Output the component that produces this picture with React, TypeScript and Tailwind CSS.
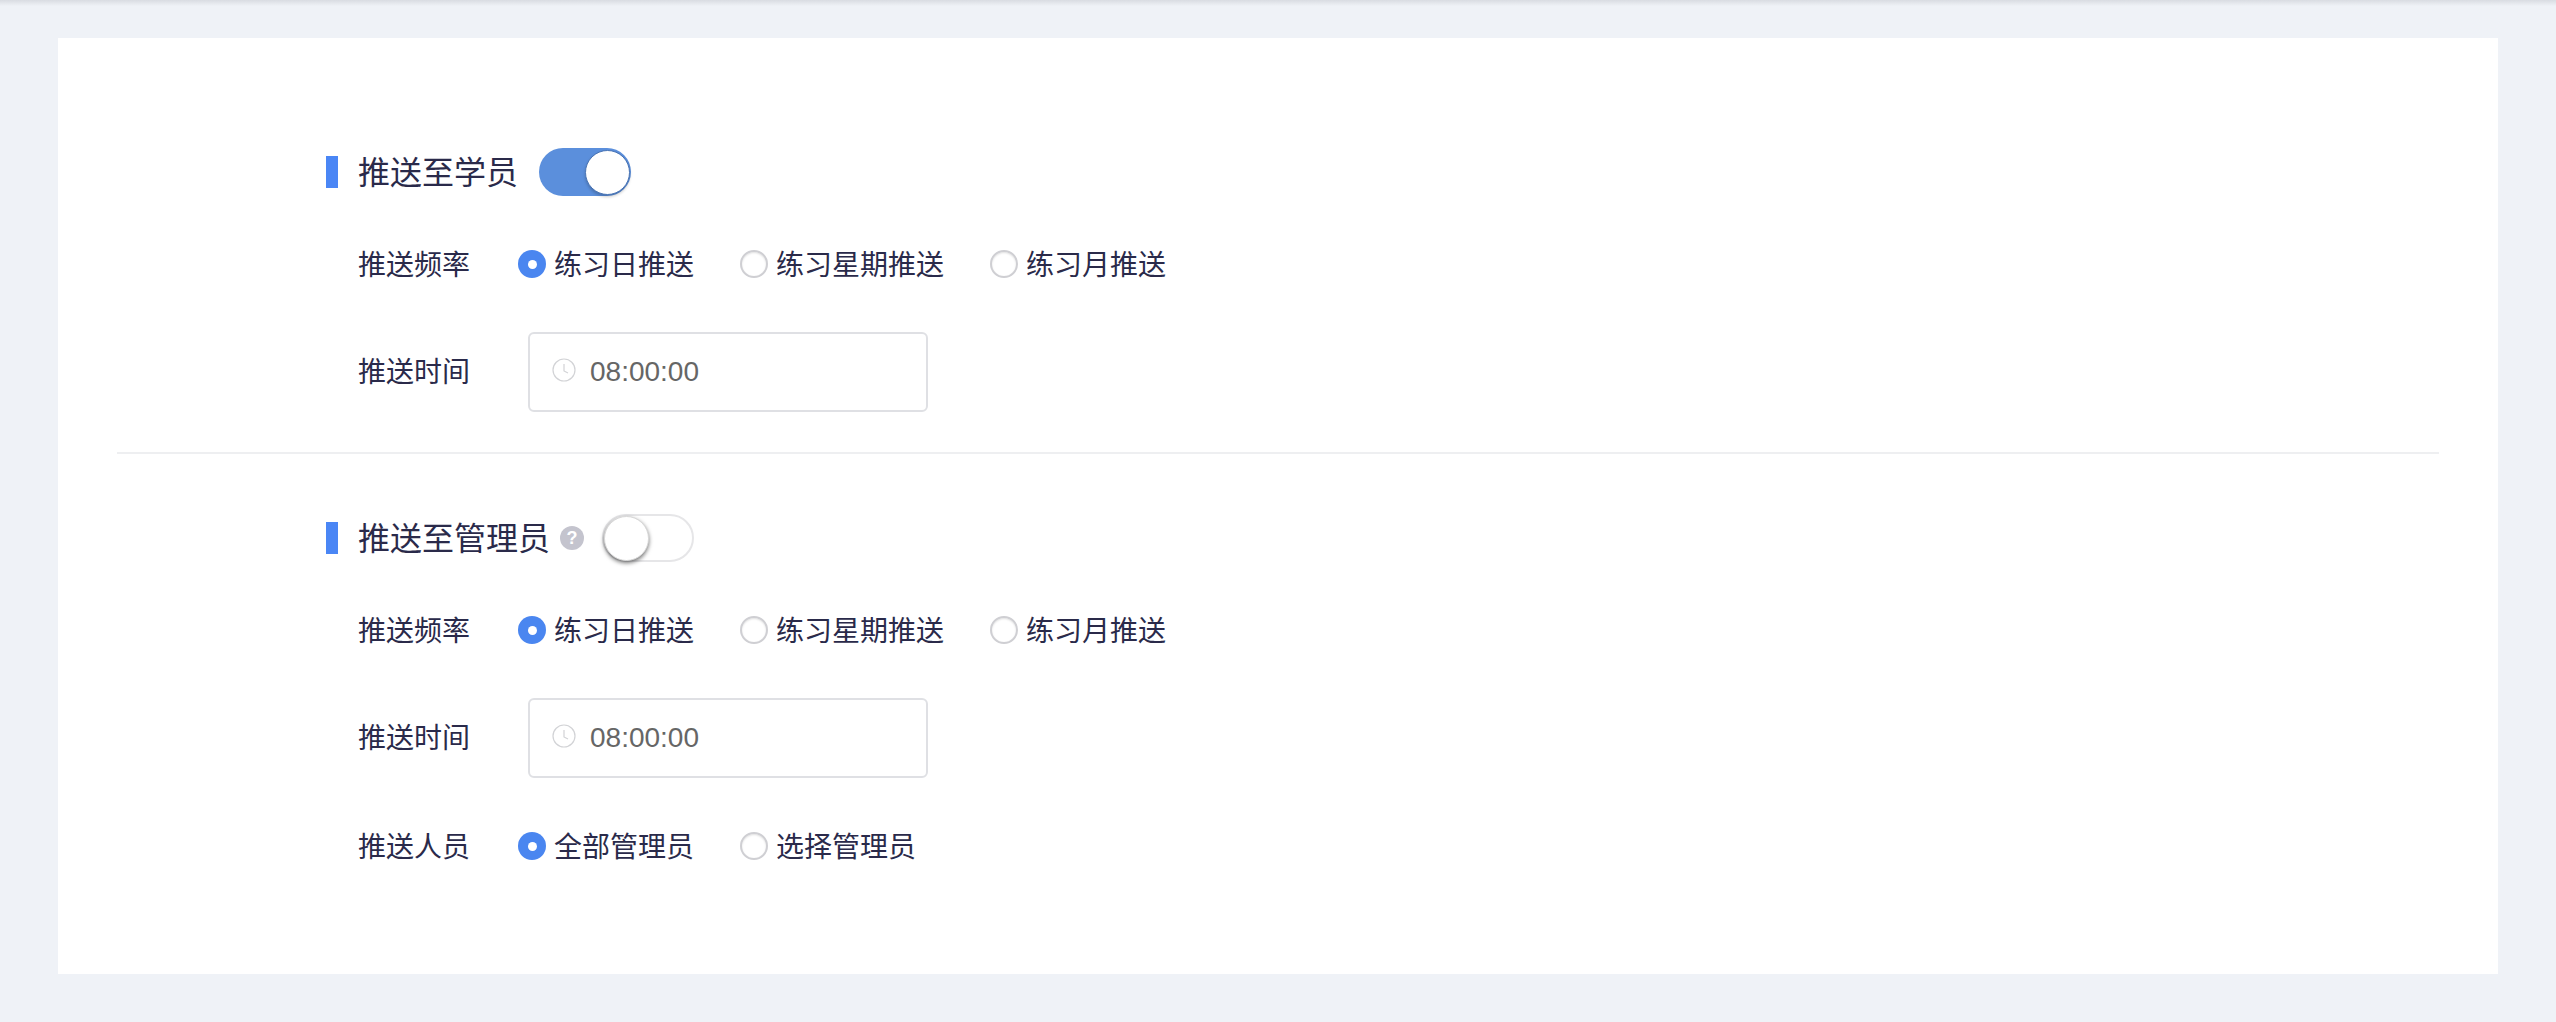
import React from "react";

const font = { fontFamily: '"Noto Sans CJK SC", "Liberation Sans", sans-serif' };

function Radio({ label, on, width }: { label: string; on?: boolean; width: string }) {
  return (
    <div className={`flex items-center ${width}`}>
      {on ? (
        <span className="flex h-[28px] w-[28px] items-center justify-center rounded-full bg-[#4a86f0]">
          <span className="h-[9px] w-[9px] rounded-full bg-white" />
        </span>
      ) : (
        <span className="h-[28px] w-[28px] rounded-full border-2 border-[#cfcfd3] bg-white shadow-[inset_0_1px_2px_rgba(0,0,0,0.12)]" />
      )}
      <span className="mb-[2px] ml-[8px] text-[28px] leading-[46px] text-[#2a2a4a]">{label}</span>
    </div>
  );
}

function Marker() {
  return <span className="h-[32px] w-[12px] bg-[#4a86f5]" />;
}

function Freq() {
  return (
    <div className="mt-[44px] flex h-[48px] items-center pl-[32px]">
      <span className="mb-[2px] w-[160px] text-[28px] leading-[46px] text-[#2a2a4a]">推送频率</span>
      <Radio label="练习日推送" on width="w-[222px]" />
      <Radio label="练习星期推送" width="w-[250px]" />
      <Radio label="练习月推送" width="w-[200px]" />
    </div>
  );
}

function Time() {
  return (
    <div className="mt-[44px] flex items-center pl-[32px]">
      <span className="mb-[4px] w-[170px] text-[28px] leading-[44px] text-[#2a2a4a]">推送时间</span>
      <div className="flex h-[80px] w-[400px] items-center rounded-[6px] border-2 border-[#dfe0e4] bg-white pl-[22px]">
        <svg width="24" height="24" viewBox="0 0 24 24" fill="none" stroke="#d2d3d6" strokeWidth="1.2" className="-mt-[4px]">
          <circle cx="12" cy="12" r="11" />
          <path d="M12 6v7l4 2" />
        </svg>
        <span className="ml-[14px] text-[28px] text-[#666666]" style={{ fontFamily: '"Liberation Sans", sans-serif' }}>
          08:00:00
        </span>
      </div>
    </div>
  );
}

export default function App() {
  return (
    <div className="relative h-[1022px] bg-[#eff2f7] px-[58px] pt-[38px] pb-[48px]" style={font}>
      <div className="absolute top-0 right-0 left-0 h-[6px] bg-gradient-to-b from-[#d9dce2] to-[#eff2f7]" />
      <div className="h-full bg-white px-[59px] pt-[110px]">
        <div className="pl-[209px]">
          <div className="flex h-[48px] items-center">
            <Marker />
            <span className="mb-[4px] ml-[20px] text-[32px] leading-[44px] text-[#2a2a4a]">推送至学员</span>
            <span className="ml-[21px] flex h-[48px] w-[92px] items-center justify-end rounded-full bg-[#5b8fdc] pr-[1px]">
              <span className="h-[45px] w-[45px] rounded-full border border-[#4a75b5] bg-white shadow-[0_2px_3px_rgba(0,0,0,0.2)]" />
            </span>
          </div>
          <Freq />
          <Time />
        </div>
        <div className="mt-[40px] h-[2px] bg-[#eeeff1]" />
        <div className="pl-[209px]">
          <div className="mt-[60px] flex h-[48px] items-center">
            <Marker />
            <span className="mb-[4px] ml-[20px] text-[32px] leading-[44px] text-[#2a2a4a]">推送至管理员</span>
            <span className="ml-[10px] flex h-[24px] w-[24px] items-center justify-center rounded-full bg-[#c4c4ce] text-[18px] leading-none font-bold text-white" style={{ fontFamily: '"Liberation Sans", sans-serif' }}>
              ?
            </span>
            <span className="ml-[18px] flex h-[48px] w-[92px] items-center rounded-full border-2 border-[#e6e6e8] bg-white">
              <span className="h-[45px] w-[45px] rounded-full border border-[#d8d8d8] bg-white shadow-[0_2px_4px_rgba(0,0,0,0.55)]" />
            </span>
          </div>
          <Freq />
          <Time />
          <div className="mt-[44px] flex h-[48px] items-center pl-[32px]">
            <span className="mb-[2px] w-[160px] text-[28px] leading-[46px] text-[#2a2a4a]">推送人员</span>
            <Radio label="全部管理员" on width="w-[222px]" />
            <Radio label="选择管理员" width="w-[250px]" />
          </div>
        </div>
      </div>
    </div>
  );
}
